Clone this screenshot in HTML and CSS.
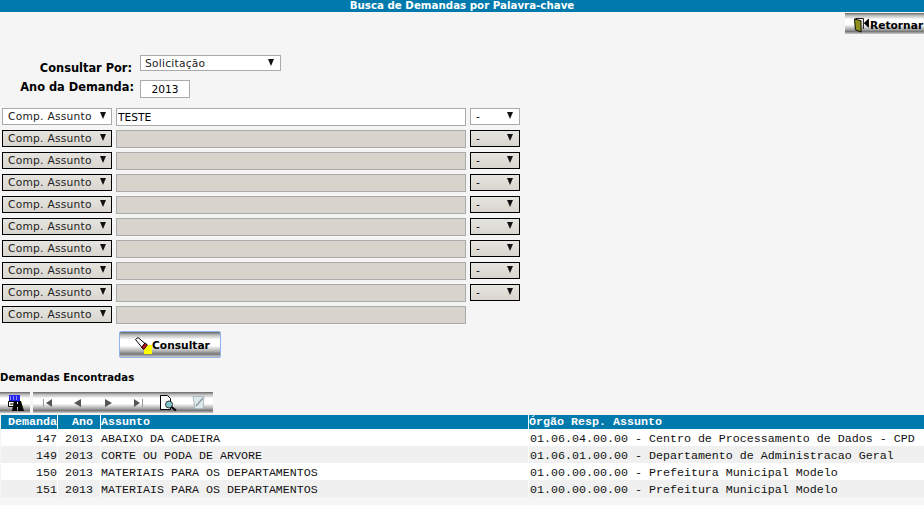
FILE: index.html

```html
<!doctype html>
<html>
<head>
<meta charset="utf-8">
<title>Busca de Demandas por Palavra-chave</title>
<link rel="stylesheet" href="styles.css">
</head>

<body>
	<div class="titulo">Busca de Demandas por Palavra-chave</div>
	<div class="topo">
		<a href="javascript:;" class="btn btn-retornar">
			<svg width="15" height="16" viewBox="0 0 16 17">
				<path d="M1.500 1.500h8.500v11" fill="none" stroke="#000"/>
				<path d="M.5 2l7 2v12l-6-2.500z" fill="#8f8f1e" stroke="#000"/>
				<path d="M15.500 2v9" stroke="#000"/>
				<path d="M15 2v9l-4.500-4.500z" fill="#000"/>
			</svg>Retornar</a>
	</div>

	<div class="filtro">
		<div class="linha-por">
			<label class="rotulo">Consultar Por:</label>
			<div class="sel sel-por"><span>Solicitação</span><i></i></div>
		</div>
		<div class="linha-ano">
			<label class="rotulo">Ano da Demanda:</label>
			<input class="ano" type="text" value="2013">
		</div>
	</div>

	<div class="termos">
		<div class="termo">
			<div class="sel sel-campo"><span>Comp. Assunto</span><i></i></div>
			<input class="txt" type="text" value="TESTE">
			<div class="sel sel-op"><span>-</span><i></i></div>
		</div>
		<div class="termo off">
			<div class="sel sel-campo"><span>Comp. Assunto</span><i></i></div>
			<input class="txt" type="text" disabled>
			<div class="sel sel-op"><span>-</span><i></i></div>
		</div>
		<div class="termo off">
			<div class="sel sel-campo"><span>Comp. Assunto</span><i></i></div>
			<input class="txt" type="text" disabled>
			<div class="sel sel-op"><span>-</span><i></i></div>
		</div>
		<div class="termo off">
			<div class="sel sel-campo"><span>Comp. Assunto</span><i></i></div>
			<input class="txt" type="text" disabled>
			<div class="sel sel-op"><span>-</span><i></i></div>
		</div>
		<div class="termo off">
			<div class="sel sel-campo"><span>Comp. Assunto</span><i></i></div>
			<input class="txt" type="text" disabled>
			<div class="sel sel-op"><span>-</span><i></i></div>
		</div>
		<div class="termo off">
			<div class="sel sel-campo"><span>Comp. Assunto</span><i></i></div>
			<input class="txt" type="text" disabled>
			<div class="sel sel-op"><span>-</span><i></i></div>
		</div>
		<div class="termo off">
			<div class="sel sel-campo"><span>Comp. Assunto</span><i></i></div>
			<input class="txt" type="text" disabled>
			<div class="sel sel-op"><span>-</span><i></i></div>
		</div>
		<div class="termo off">
			<div class="sel sel-campo"><span>Comp. Assunto</span><i></i></div>
			<input class="txt" type="text" disabled>
			<div class="sel sel-op"><span>-</span><i></i></div>
		</div>
		<div class="termo off">
			<div class="sel sel-campo"><span>Comp. Assunto</span><i></i></div>
			<input class="txt" type="text" disabled>
			<div class="sel sel-op"><span>-</span><i></i></div>
		</div>
		<div class="termo off">
			<div class="sel sel-campo"><span>Comp. Assunto</span><i></i></div>
			<input class="txt" type="text" disabled>
		</div>
	</div>

	<a href="javascript:;" class="btn btn-consultar">
		<svg width="17" height="17" viewBox="0 0 17 17">
			<path d="M.5 2.500L3 .5l7 6-3 4z" fill="#fff" stroke="#000"/>
			<path d="M6.500 10.500l3.500-4.500 2.500 2-3.500 4.500z" fill="#c4121a" stroke="#000"/>
			<path d="M9 17v-4l4-5h4v9z" fill="#ff0"/>
		</svg>Consultar</a>

	<h3 class="subtitulo">Demandas Encontradas</h3>

	<div class="barra">
		<a href="javascript:;" class="btn btn-busca">
			<svg width="16" height="16" viewBox="0 0 16 16">
				<path d="M1 0h11v7H1z" fill="#2222ee"/>
				<path d="M2 2h1M5 2h1M8 2h1M2 4h1M5 4h1M8 4h1" stroke="#fff"/>
				<path d="M.5 6.500h8v5h-8z" fill="#fff" stroke="#000"/>
				<path d="M2 9h4" stroke="#000"/>
				<path d="M6 6h3v3h1V6h3l3 10h-6v-4H9v4H4z" fill="#000"/>
			</svg>
		</a>
		<div class="btn nav">
			<svg width="10" height="8" viewBox="0 0 10 8"><path d="M.5 0v8" stroke="#999"/><path d="M9 0v8L3 4z" fill="#555"/></svg>
			<svg width="8" height="8" viewBox="0 0 8 8"><path d="M7 0v8L0 4z" fill="#555"/></svg>
			<svg width="8" height="8" viewBox="0 0 8 8"><path d="M1 0v8l7-4z" fill="#555"/></svg>
			<svg width="10" height="8" viewBox="0 0 10 8"><path d="M9.500 0v8" stroke="#999"/><path d="M1 0v8l6-4z" fill="#555"/></svg>
			<svg width="17" height="16" viewBox="0 0 17 16">
				<path d="M.5.5h7l3 3v11H.5z" fill="#fff" stroke="#000"/>
				<circle cx="9" cy="9.500" r="3.500" fill="#7fc4c8" stroke="#333"/>
				<path d="M11.500 12L16 15.500" stroke="#000" stroke-width="2"/>
			</svg>
			<svg width="13" height="15" viewBox="0 0 13 15">
				<path d="M1 1.500h11l-1 12H3z" fill="#dfe8ea" stroke="#a9bcc2"/>
				<path d="M4 11l7-8" stroke="#8c9ea3" stroke-width="1.500"/>
			</svg>
		</div>
	</div>

	<table class="grade">
		<thead>
			<tr><th class="c-dem">Demanda</th><th class="c-ano">Ano</th><th class="c-ass">Assunto</th><th>Órgão Resp. Assunto</th></tr>
		</thead>
		<tbody>
			<tr><td class="num">147</td><td class="num">2013</td><td>ABAIXO DA CADEIRA</td><td class="org">01.06.04.00.00 - Centro de Processamento de Dados - CPD</td></tr>
			<tr><td class="num">149</td><td class="num">2013</td><td>CORTE OU PODA DE ARVORE</td><td class="org">01.06.01.00.00 - Departamento de Administracao Geral</td></tr>
			<tr><td class="num">150</td><td class="num">2013</td><td>MATERIAIS PARA OS DEPARTAMENTOS</td><td class="org">01.00.00.00.00 - Prefeitura Municipal Modelo</td></tr>
			<tr><td class="num">151</td><td class="num">2013</td><td>MATERIAIS PARA OS DEPARTAMENTOS</td><td class="org">01.00.00.00.00 - Prefeitura Municipal Modelo</td></tr>
		</tbody>
	</table>
</body>
</html>
```

FILE: styles.css

```css
*{margin:0; padding:0; box-sizing:border-box;}
body{background:#f5f5f5; font-family:"DejaVu Sans",Verdana,sans-serif; font-size:11px; color:#000; overflow:hidden;}

.titulo{height:12px; background:#0079ad; color:#fff; font-size:10.270px; font-weight:bold; line-height:11px; text-align:center;}

.btn{display:flex; align-items:center; color:#000; text-decoration:none; font-weight:bold; font-size:10.670px; background:linear-gradient(#666 0,#bbb 12%,#fff 30%,#fff 55%,#aaa 78%,#777 88%,#ccc 100%);}
.btn svg{flex:none;}

.topo{display:flex; justify-content:flex-end; padding-top:1px; height:43px;}
.btn-retornar{width:79px; height:21px; padding:3px 0 0 9px;}
.btn-retornar svg{margin:-1px 1px 0 0;}

.filtro{height:53px;}
.linha-por{display:flex; height:25px;}
.linha-por .rotulo{width:132px; padding-top:6px;}
.linha-por .sel{margin-left:8px;}
.linha-ano{display:flex; height:27px;}
.linha-ano .rotulo{width:134px;}
.linha-ano .ano{margin-left:6px;}
.rotulo{display:block; text-align:right; font-weight:bold; font-size:11.400px;}

.sel{display:flex; align-items:center; justify-content:space-between; height:17px; background:#fff; border:1px solid #aaa; font-size:10.670px; padding:0 5px 1px 5px; color:#222; letter-spacing:.25px;}
.sel i{display:block; width:0; height:0; border-left:3.500px solid transparent; border-right:3.500px solid transparent; border-top:7px solid #111; margin-top:-2px;}
.sel-por{width:141px; height:16px; padding:0 6px 0 4px;}
.sel-campo{width:110px; flex:none;}
.sel-op{width:50px; flex:none; padding-right:6px; color:#000;}

.ano{width:50px; height:18px; border:1px solid #aaa; background:#fff; font:10.670px "DejaVu Sans",sans-serif; text-align:center; color:#000; outline:none;}

.termos{padding-left:2px; height:223px;}
.termo{display:flex; align-items:flex-start; height:22px; gap:4px;}
.txt{width:350px; height:18px; border:1px solid #aaa; background:#fff; padding:0 1px; font:10.670px "DejaVu Sans",sans-serif; color:#000; outline:none; flex:none;}
.off .sel{background:linear-gradient(#e6e4df,#d9d6cf); border-color:#000;}
.off .txt{background:#d8d4cc; border-color:#aaa;}

.btn-consultar{width:102px; height:27px; margin-left:119px; padding:2px 0 0 15px; border:1px solid #8fb3ea; border-radius:2px;}

.subtitulo{font-size:10.100px; font-weight:bold; margin-top:14px; height:20px; line-height:12px;}

.barra{display:flex; gap:3px; height:21px;}
.btn-busca{width:30px; height:21px; padding-left:8px;}
.nav{display:grid; grid-template-columns:repeat(6,30px); justify-items:center; align-items:center; width:180px; height:21px;}

.grade{width:924px; margin-top:2px; border-collapse:separate; border-spacing:0; table-layout:fixed; font-family:"Liberation Mono","Courier New",monospace; font-size:11.670px; padding-left:1px;}
.grade th{height:14px; background:#0079ad; color:#fff; font-weight:bold; text-align:left; line-height:13px; border-left:1px solid #fff; padding:0;}
.grade th:first-child{border-left:0;}
.grade th.c-dem{width:56px; text-align:right;}
.grade th.c-ano{width:43px; text-align:right; padding-right:7px;}
.c-ass{width:428px;}
.grade td{height:17px; background:#fff; line-height:14px; border-left:1px solid #fff; padding:3px 0 0; white-space:nowrap; color:#111;}
.grade td:first-child{border-left:0;}
.grade tbody tr:nth-child(even) td{background:#f0f0f0;}
.grade td.num{text-align:right;}
.grade td.num + td.num{padding-right:7px;}
.grade td.org{padding-left:1px;}
```
